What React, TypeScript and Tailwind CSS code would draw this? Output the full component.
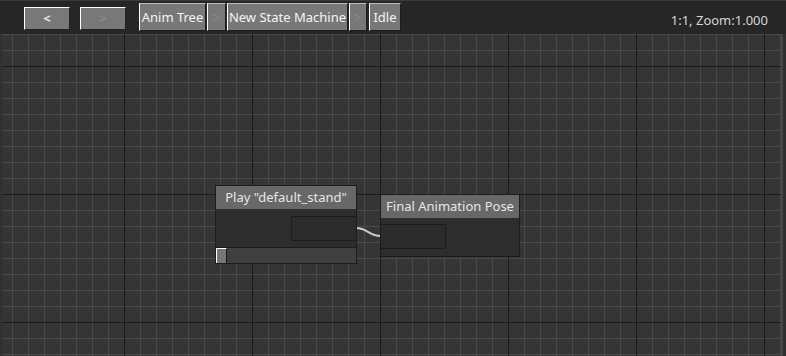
import React from "react";

const font = { fontFamily: '"Noto Sans", "Open Sans", sans-serif' };

function NavButton({ label, dim }: { label: string; dim?: boolean }) {
  return (
    <div
      className={`mt-[6px] w-[46px] h-[23px] flex items-center justify-center bg-[#787878] border-t border-l border-t-white border-l-white border-b border-r border-b-[#222] border-r-[#222] text-[13px] font-bold leading-none ${
        dim ? "text-[#8c8c8c]" : "text-[#eeeeee]"
      }`}
    >
      {label}
    </div>
  );
}

function PathButton({ label, w, sep }: { label: string; w: string; sep?: boolean }) {
  return (
    <div
      className={`mt-[2px] h-[28px] ${w} flex items-center justify-center whitespace-nowrap bg-[#787878] border-t border-l border-t-[#bdbdbd] border-l-white border-b border-r border-b-[#1e1e1e] border-r-[#1e1e1e] text-[13px] leading-none ${
        sep ? "text-[#8e8e8e]" : "text-[#f4f4f4]"
      }`}
    >
      {label}
    </div>
  );
}

export default function App() {
  return (
    <div className="w-[786px] h-[356px] bg-[#262626] flex flex-col overflow-hidden" style={font}>
      {/* toolbar */}
      <div className="h-[34px] shrink-0 flex items-start border-t border-[#393939] pl-[24px]">
        <NavButton label="<" />
        <div className="w-[10px]" />
        <NavButton label=">" dim />
        <div className="w-[13px]" />
        <PathButton label="Anim Tree" w="w-[67px]" />
        <div className="w-[1px]" />
        <PathButton label=">" w="w-[19px]" sep />
        <div className="w-[1px]" />
        <PathButton label="New State Machine" w="w-[121px]" />
        <div className="w-[1px]" />
        <PathButton label=">" w="w-[18px]" sep />
        <div className="w-[2px]" />
        <PathButton label="Idle" w="w-[32px]" />
        <div className="ml-auto mr-[18px] mt-[11px] whitespace-nowrap text-[13px] leading-[16px] text-[#d6d6d6]">1:1, Zoom:1.000</div>
      </div>

      {/* graph canvas */}
      <div className="flex-1 flex pl-[2px] pr-[3px] bg-[#303030]">
        <div className="flex-1 relative bg-[#353535] border-r-2 border-[#474747] overflow-hidden">
          <svg className="absolute inset-0" width="100%" height="100%">
            <defs>
              <pattern id="minor" width="16" height="16" patternUnits="userSpaceOnUse">
                <line x1="10.5" y1="0" x2="10.5" y2="16" stroke="#4a4a4a" strokeWidth="1" />
                <line x1="0" y1="0.5" x2="16" y2="0.5" stroke="#4a4a4a" strokeWidth="1" />
              </pattern>
              <pattern id="major" width="128" height="128" patternUnits="userSpaceOnUse">
                <line x1="122.5" y1="0" x2="122.5" y2="128" stroke="#1b1b1b" strokeWidth="1" />
                <line x1="0" y1="32.5" x2="128" y2="32.5" stroke="#1b1b1b" strokeWidth="1" />
              </pattern>
            </defs>
            <rect width="100%" height="100%" fill="url(#minor)" />
            <rect width="100%" height="100%" fill="url(#major)" />
            {/* connection wire */}
            <path d="M354 194 C366 194 366 202 379 202" fill="none" stroke="#cdcdcd" strokeWidth="2" />
          </svg>

          {/* Play node */}
          <div className="absolute left-[213px] top-[151px] w-[142px] h-[79px] bg-[#2d2d2d] border border-[#1c1c1c] flex flex-col">
            <div className="h-[23px] shrink-0 bg-[#686868] flex items-center justify-center whitespace-nowrap text-[13px] text-[#e6e6e6] leading-none">
              Play "default_stand"
            </div>
            <div className="flex-1 flex justify-end pt-[7px]">
              <div className="w-[65px] h-[25px] border border-[#1c1c1c] border-r-0 bg-[#2b2b2b]" />
            </div>
            <div className="h-[16px] shrink-0 flex bg-[#404040] border-t border-[#1c1c1c]">
              <div className="w-[11px] h-full bg-[#777] border-t border-l border-t-white border-l-white border-r border-r-[#151515]" />
            </div>
          </div>

          {/* Final Animation Pose node */}
          <div className="absolute left-[378px] top-[160px] w-[140px] h-[63px] bg-[#2d2d2d] border border-[#1c1c1c] flex flex-col">
            <div className="h-[23px] shrink-0 bg-[#686868] flex items-center justify-center whitespace-nowrap text-[13px] text-[#e6e6e6] leading-none">
              Final Animation Pose
            </div>
            <div className="flex-1 pt-[6px]">
              <div className="w-[65px] h-[25px] border border-[#1c1c1c] border-l-0 bg-[#2b2b2b]" />
            </div>
          </div>
        </div>
      </div>
    </div>
  );
}
